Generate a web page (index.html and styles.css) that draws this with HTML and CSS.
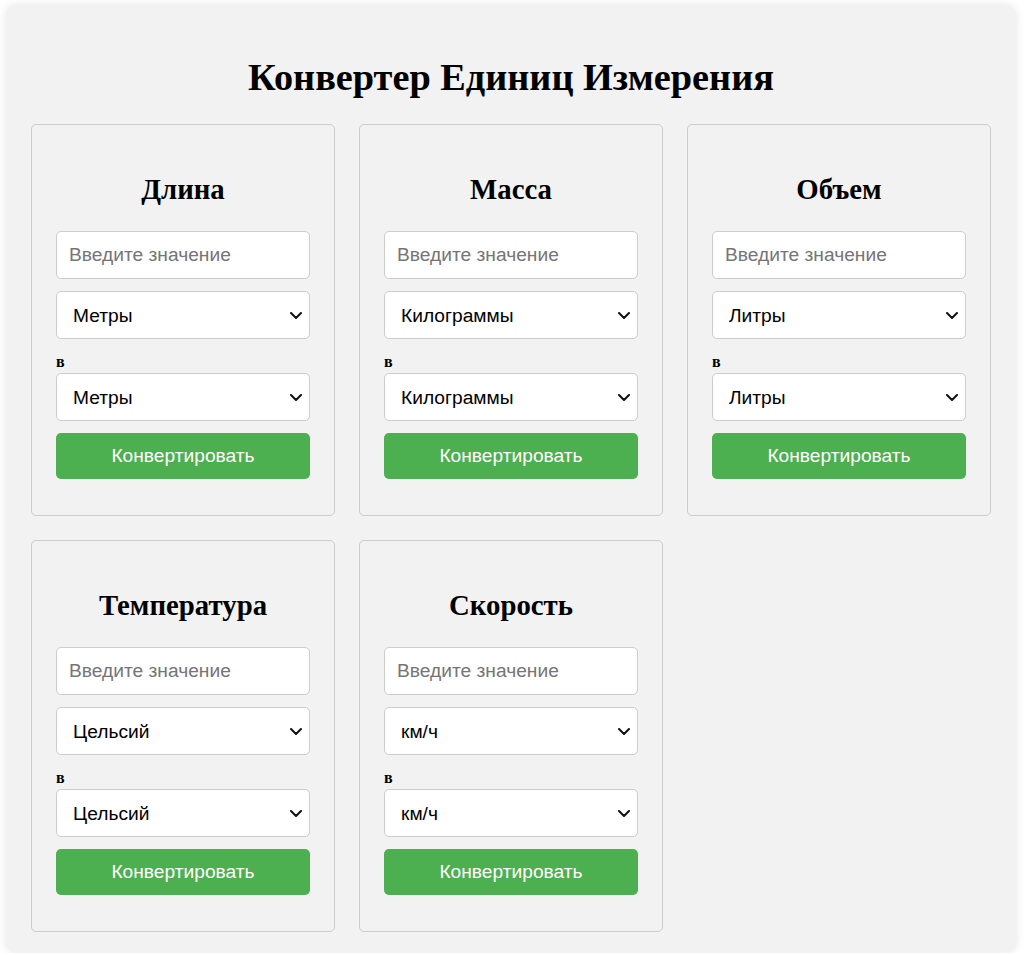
FILE: index.html
```html
<!DOCTYPE html>
<html lang="ru">
<head>
<meta charset="utf-8">
<title>Конвертер Единиц Измерения</title>
<link rel="stylesheet" href="styles.css">
</head>
<body>
<div class="container">
  <h1 class="page-title">Конвертер Единиц Измерения</h1>
  <div class="grid">
    <div class="card">
      <h2 class="card-title">Длина</h2>
      <input class="field" type="text" placeholder="Введите значение">
      <select class="field select"><option>Метры</option></select>
      <label class="to-label">в</label>
      <select class="field select to-select"><option>Метры</option></select>
      <button class="btn">Конвертировать</button>
    </div>
    <div class="card">
      <h2 class="card-title">Масса</h2>
      <input class="field" type="text" placeholder="Введите значение">
      <select class="field select"><option>Килограммы</option></select>
      <label class="to-label">в</label>
      <select class="field select to-select"><option>Килограммы</option></select>
      <button class="btn">Конвертировать</button>
    </div>
    <div class="card">
      <h2 class="card-title">Объем</h2>
      <input class="field" type="text" placeholder="Введите значение">
      <select class="field select"><option>Литры</option></select>
      <label class="to-label">в</label>
      <select class="field select to-select"><option>Литры</option></select>
      <button class="btn">Конвертировать</button>
    </div>
    <div class="card">
      <h2 class="card-title">Температура</h2>
      <input class="field" type="text" placeholder="Введите значение">
      <select class="field select"><option>Цельсий</option></select>
      <label class="to-label">в</label>
      <select class="field select to-select"><option>Цельсий</option></select>
      <button class="btn">Конвертировать</button>
    </div>
    <div class="card">
      <h2 class="card-title">Скорость</h2>
      <input class="field" type="text" placeholder="Введите значение">
      <select class="field select"><option>км/ч</option></select>
      <label class="to-label">в</label>
      <select class="field select to-select"><option>км/ч</option></select>
      <button class="btn">Конвертировать</button>
    </div>
  </div>
</div>
</body>
</html>
```
FILE: styles.css
```css
html, body {
  margin: 0;
  padding: 0;
  background: #ffffff;
}

body {
  font-family: "Liberation Serif", "Times New Roman", serif;
  color: #000;
}

.container {
  box-sizing: border-box;
  width: 1010px;
  margin: 5px 0 0 6px;
  padding: 50px 25px 21px;
  background: #f2f2f2;
  border-radius: 10px;
  box-shadow: 0 0 10px rgba(0, 0, 0, 0.1);
}

.page-title {
  margin: 0 0 25px;
  font-size: 38.3px;
  font-weight: bold;
  text-align: center;
  line-height: normal;
}

.grid {
  display: grid;
  grid-template-columns: repeat(3, 304px);
  gap: 24px;
}

.card {
  box-sizing: border-box;
  display: flex;
  flex-direction: column;
  padding: 24px 24px 36px;
  border: 1px solid #ccc;
  border-radius: 5px;
  background: #f2f2f2;
}

.card-title {
  margin: 24px 0 25px;
  font-size: 28.8px;
  font-weight: bold;
  text-align: center;
  line-height: normal;
}

.field {
  box-sizing: border-box;
  width: 100%;
  height: 48px;
  margin: 0 0 12px;
  padding: 0 12px;
  border: 1px solid #ccc;
  border-radius: 5px;
  background: #fff;
  font-family: "Liberation Sans", Arial, sans-serif;
  font-size: 19.2px;
  color: #000;
}

.field::placeholder {
  color: #757575;
}

.select {
  margin-bottom: 0;
  padding-left: 16px;
  padding-right: 30px;
  appearance: none;
  -webkit-appearance: none;
  background-image: url("data:image/svg+xml;utf8,<svg xmlns='http://www.w3.org/2000/svg' width='12' height='7' viewBox='0 0 12 7'><path d='M1 1l5 5 5-5' fill='none' stroke='%23111' stroke-width='2' stroke-linecap='round' stroke-linejoin='round'/></svg>");
  background-repeat: no-repeat;
  background-position: right 7px center;
  background-size: 12px 7px;
}

.to-select {
  margin: 2px 0 12px;
}

.to-label {
  display: block;
  margin-top: 14px;
  font-size: 16px;
  font-weight: bold;
  line-height: 18px;
}

.btn {
  box-sizing: border-box;
  width: 100%;
  height: 46px;
  border: none;
  border-radius: 5px;
  background: #4caf50;
  color: #fff;
  font-family: "Liberation Sans", Arial, sans-serif;
  font-size: 19.2px;
  cursor: pointer;
}
```
